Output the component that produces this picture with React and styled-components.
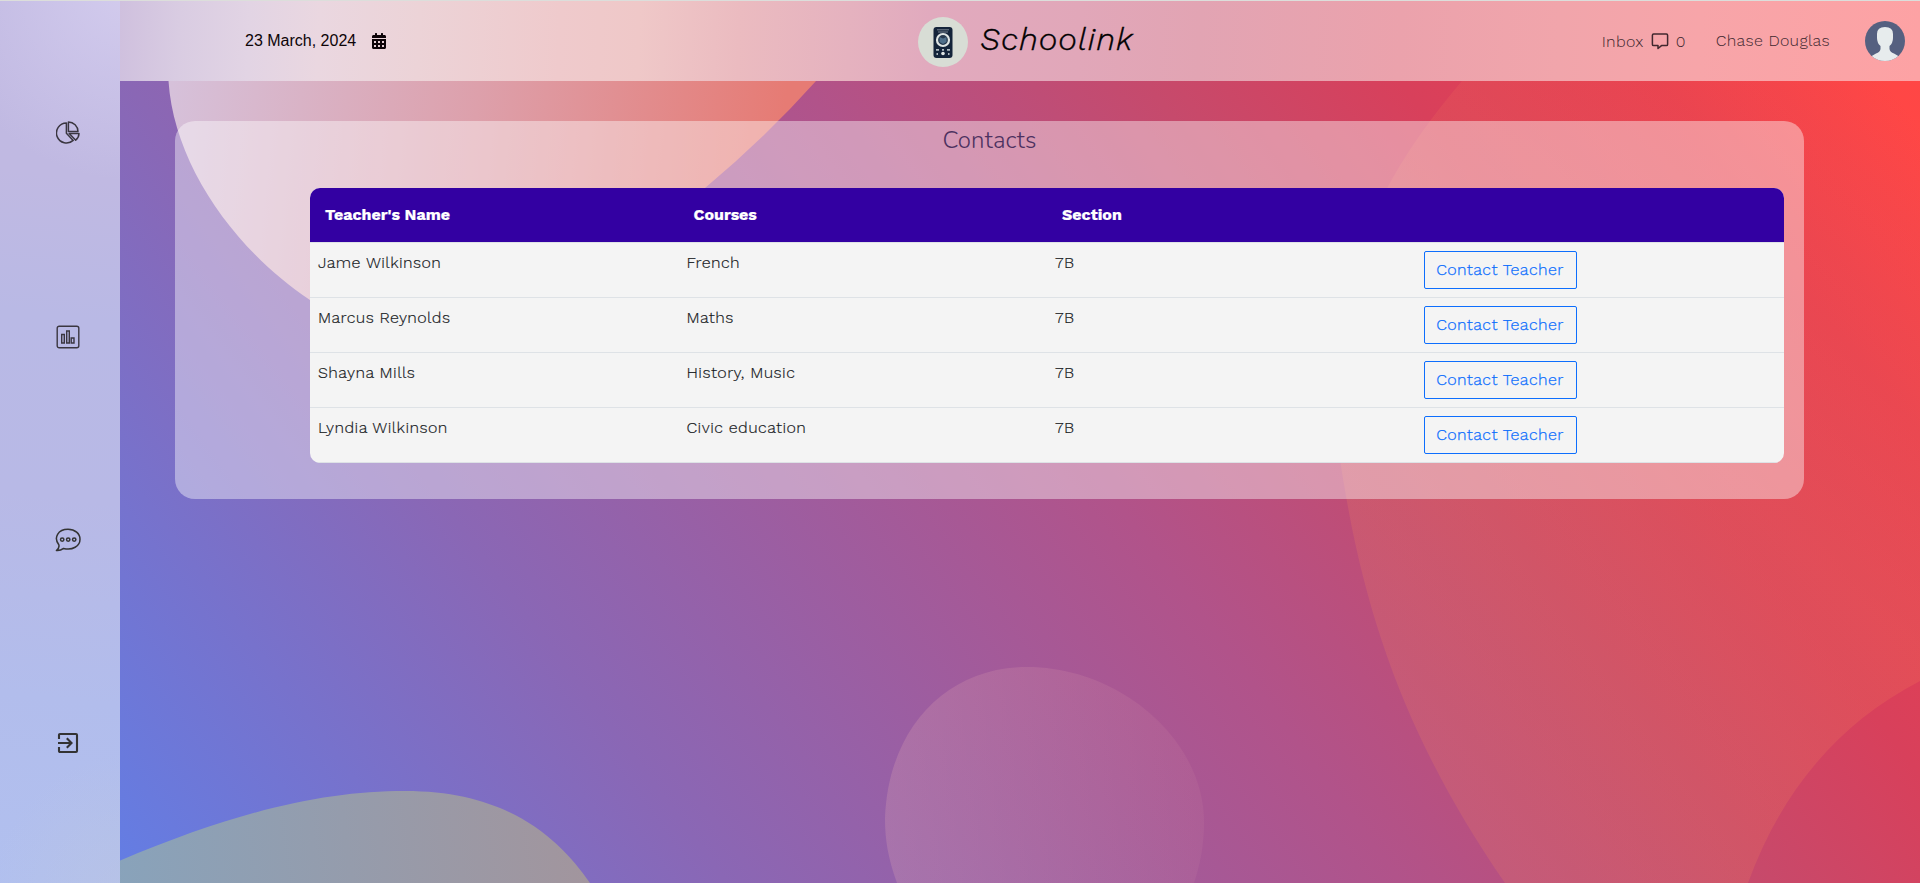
import React from "react";
import styled, { createGlobalStyle } from "styled-components";
import { FaCalendarAlt } from "react-icons/fa";

const Global = createGlobalStyle`
  *{box-sizing:border-box}
  html,body{margin:0;height:100%;overflow:hidden}
  body{font-family:"Work Sans","Inter","Noto Sans",sans-serif;font-size:16px;color:#212529}
`;
const Shell = styled.div`
  position:relative;display:flex;height:100vh;border-top:1px solid #dcdedb;overflow:hidden;
`;
const Backdrop = styled.svg`
  position:absolute;inset:-1px 0 0 0;width:100%;height:calc(100% + 1px);
`;
const Sidebar = styled.nav`
  position:relative;width:120px;flex:none;display:flex;flex-direction:column;align-items:center;
  padding:40px 0 0 16px;color:#333;
  background:
    radial-gradient(circle at 130px -10px,rgba(215,208,240,.8),rgba(215,208,240,0) 190px),
    radial-gradient(circle at 140px 900px,rgba(190,198,220,.5),rgba(190,198,220,0) 150px),
    linear-gradient(187deg,#c1b9e2 0,#c0b9e2 180px,#b9b9e5 320px,#b8b9e6 500px,#b2bdec 700px,#b1c0ef 100%);
`;
const NavItem = styled.a`
  height:203.5px;display:flex;align-items:flex-start;padding-top:80px;
  svg{display:block}
`;
const Main = styled.div`position:relative;flex:1;min-width:0;display:flex;flex-direction:column;`;
const Header = styled.header`
  height:80px;flex:none;display:grid;grid-template-columns:798px 1fr auto;align-items:center;padding-right:15px;
  background:linear-gradient(92deg,#cfc0de 0,#d9cce2 60px,#e2d4e4 130px,#ead7e0 200px,#ecd3d7 300px,#efcacc 440px,#efc8c8 520px,
    #ebbbc0 620px,#e5b2bf 730px,#e1aabe 810px,#e1a7b9 960px,#e2a4b3 1080px,#eba2ac 1280px,#f1a5ab 1440px,#f7a5a9 1580px,#fda2a4 1800px);
`;
const DateBox = styled.div`
  display:flex;align-items:center;gap:15px;padding-left:125px;color:#0d0408;
  font-family:"Liberation Sans",sans-serif;font-size:16px;
`;
const Brand = styled.div`display:flex;align-items:center;gap:12px;padding-top:2px;`;
const BrandName = styled.span`
  font-size:32px;font-style:italic;font-weight:300;color:#000;letter-spacing:1.15px;line-height:40px;margin-top:-7px;
  -webkit-text-stroke:.4px #000;
`;
const UserArea = styled.div`display:flex;align-items:center;color:#41282f;font-weight:300;letter-spacing:.3px;`;
const Inbox = styled.div`display:flex;align-items:center;gap:7px;margin-right:30px;`;
const UserName = styled.span`margin:-1px 35px 0 0;`;
const Panel = styled.section`
  margin:40px 116px 0 55px;height:378px;border-radius:20px;background:rgba(255,255,255,.41);padding:0 20px 0 135px;
`;
const Title = styled.h1`
  margin:0 0 0 -135px;width:1629px;height:67px;padding-top:3px;text-align:center;
  font:300 24px/32px "Nunito","Open Sans",sans-serif;color:#4d3160;letter-spacing:.15px;
`;
const Table = styled.div`border-radius:10px;overflow:hidden;background:#f4f4f4;`;
const Row = styled.div`
  display:grid;grid-template-columns:repeat(4,1fr);height:55px;border-bottom:1px solid #dee2e6;
  font-weight:300;letter-spacing:.41px;color:#16191c;-webkit-text-stroke:.2px;
`;
const HeadRow = styled(Row)`
  background:#3300a2;color:#fff;font-weight:700;letter-spacing:0;
`;
const HeadCell = styled.div`padding:0 15px;line-height:54px;`;
const Cell = styled.div`padding:8px;line-height:24px;`;
const ContactButton = styled.button`
  display:block;width:153px;height:38px;padding:0 0 2px;border:1px solid #0d6efd;border-radius:2px;background:transparent;
  color:#0d6efd;font:300 16px "Work Sans","Inter",sans-serif;letter-spacing:.4px;-webkit-text-stroke:.25px;
`;

const teachers = [
  ["Jame Wilkinson", "French", "7B"],
  ["Marcus Reynolds", "Maths", "7B"],
  ["Shayna Mills", "History, Music", "7B"],
  ["Lyndia Wilkinson", "Civic education", "7B"],
];

const Scenery = () => (
  <Backdrop viewBox="0 0 1920 883" preserveAspectRatio="none">
    <defs>
      <linearGradient id="base" gradientUnits="userSpaceOnUse" x1="-336" y1="252" x2="1168" y2="-876">
        <stop offset="0" stopColor="#647de3" />
        <stop offset=".251" stopColor="#8a67b5" />
        <stop offset=".538" stopColor="#b1538a" />
        <stop offset=".685" stopColor="#c64a6c" />
        <stop offset=".793" stopColor="#d8405b" />
        <stop offset=".9" stopColor="#e83f50" />
        <stop offset="1" stopColor="#ff4545" />
      </linearGradient>
      <linearGradient id="peach" gradientUnits="userSpaceOnUse" x1="170" y1="100" x2="780" y2="160">
        <stop offset="0" stopColor="#d6c1da" />
        <stop offset=".5" stopColor="#dda0ab" />
        <stop offset="1" stopColor="#e67b74" />
      </linearGradient>
      <linearGradient id="ember" gradientUnits="userSpaceOnUse" x1="1650" y1="450" x2="1900" y2="100">
        <stop offset="0" stopColor="#ff9058" stopOpacity=".17" />
        <stop offset="1" stopColor="#ff9058" stopOpacity=".02" />
      </linearGradient>
      <linearGradient id="orb" x1="0" x2="1" y1="0" y2="0">
        <stop offset="0" stopColor="#ffc8b8" stopOpacity=".18" />
        <stop offset="1" stopColor="#ffc8b8" stopOpacity=".06" />
      </linearGradient>
      <linearGradient id="moss" gradientUnits="userSpaceOnUse" x1="110" x2="580" y1="870" y2="800">
        <stop offset="0" stopColor="#88a3bb" />
        <stop offset="1" stopColor="#a2959d" />
      </linearGradient>
    </defs>
    <rect width="1920" height="883" fill="url(#base)" />
    <path d="M160 0L168.5 81C174 165 235 250 310 300C430 360 600 290 705 188Q765 138 816 81Q850 48 890 0Z" fill="url(#peach)" />
    <path d="M1540 0C1370 160 1310 300 1345 490C1370 640 1420 760 1505 883H1748C1780 795 1835 725 1920 681V0Z" fill="url(#ember)" />
    <path d="M897 883C888 858 885 840 885 818C888 730 945 667 1027 667C1120 667 1204 740 1204 822C1204 845 1200 865 1194 883Z" fill="url(#orb)" />
    <path d="M60 883L119 861C240 810 325 791 405 791C510 791 560 840 590 883Z" fill="url(#moss)" />
  </Backdrop>
);

const PieIcon = () => (
  <svg width="24" height="24" viewBox="0 0 24 24" fill="none" stroke="#3a3640" strokeWidth="1.5" strokeLinejoin="round">
    <path d="M10.4 2A10 10 0 1 0 17.2 19.4L10.4 12.2Z" />
    <path d="M12.4 1V10.5H22A9.7 9.7 0 0 0 12.4 1Z" />
    <path d="M13.2 12.5H23A9 9 0 0 1 19.7 19.2Z" />
  </svg>
);
const ChartIcon = () => (
  <svg width="24" height="24" viewBox="0 0 24 24" fill="none" stroke="#3a3640" strokeWidth="1.4">
    <rect x="1.2" y="1.2" width="21.6" height="21.6" rx="2" />
    <path d="M5.7 9.5H8.3V18H5.7ZM10.7 6H13.3V18H10.7ZM15.2 13H18V18H15.2Z" />
  </svg>
);
const ChatIcon = () => (
  <svg width="26" height="24" viewBox="0 0 26 24" fill="none" stroke="#333" strokeWidth="1.5" strokeLinejoin="round">
    <path d="M3.8 16.8C-1.8 9.5 3.2 1.3 13 1.3C20 1.3 25 5.6 25 11.2C25 18.2 17.5 22.6 8.6 20.4C6.5 22 4 22.8 1.4 22.5C3 21.2 4.6 19.2 3.8 16.8Z" />
    <circle cx="7.2" cy="11.6" r="1.7" /><circle cx="13.2" cy="11.6" r="1.7" /><circle cx="19.2" cy="11.6" r="1.7" />
  </svg>
);
const ExitIcon = () => (
  <svg width="22" height="22" viewBox="0 0 22 22" fill="none" stroke="#333" strokeWidth="2.1">
    <path d="M2 7V3Q2 2 3 2H19Q20 2 20 3V19Q20 20 19 20H3Q2 20 2 19V15M1 11H14.5M9.8 6.3L14.5 11L9.8 15.7" />
  </svg>
);
const InboxIcon = () => (
  <svg width="18" height="18" viewBox="0 0 18 18" fill="none" stroke="#41282f" strokeWidth="1.5" strokeLinejoin="round">
    <path d="M2.6 2H15.4Q16.6 2 16.6 3.2V12.4Q16.6 13.6 15.4 13.6H10.5L7 16.5V13.6H2.6Q1.4 13.6 1.4 12.4V3.2Q1.4 2 2.6 2Z" />
  </svg>
);
const LogoMark = () => (
  <svg width="50" height="50" viewBox="0 0 50 50">
    <circle cx="25" cy="25" r="25" fill="#d8ddd5" />
    <rect x="15.5" y="10" width="19" height="31" rx="3" fill="#14243a" />
    <path d="M19 12.8H31M20 15H30" stroke="#77828f" strokeWidth="1" />
    <circle cx="25" cy="23" r="6" fill="#26384d" stroke="#dfe5e4" strokeWidth="2.2" />
    <path d="M21.5 20L25 21.5L28.5 20V25L25 27L21.5 25Z" fill="#4f6f8a" />
    <circle cx="25" cy="36.5" r="1.8" fill="#dfe5e4" />
    <path d="M18 32.8H21M24 32.8H26M29 32.8H32M18.5 37H20M30 37H31.5" stroke="#b0bac1" strokeWidth="1.8" />
  </svg>
);
const Avatar = () => (
  <svg width="40" height="40" viewBox="0 0 40 40">
    <defs><clipPath id="disc"><circle cx="20" cy="20" r="20" /></clipPath></defs>
    <g clipPath="url(#disc)">
      <rect width="40" height="40" fill="#556080" />
      <path d="M12 13Q12 6 20 6T28 13V17Q28 22 24.5 25V28Q25 31 29 32.5L35 36V40H5V36L11 32.5Q15 31 15.5 28V25Q12 22 12 17Z" fill="#e7eced" />
    </g>
  </svg>
);

export default function App() {
  return (
    <Shell>
      <Global />
      <Scenery />
      <Sidebar>
        {[PieIcon, ChartIcon, ChatIcon, ExitIcon].map((Icon, i) => (
          <NavItem key={i}><Icon /></NavItem>
        ))}
      </Sidebar>
      <Main>
        <Header>
          <DateBox>23 March, 2024 <FaCalendarAlt size={16} /></DateBox>
          <Brand><LogoMark /><BrandName>Schoolink</BrandName></Brand>
          <UserArea>
            <Inbox>Inbox <InboxIcon /> 0</Inbox>
            <UserName>Chase Douglas</UserName>
            <Avatar />
          </UserArea>
        </Header>
        <Panel>
          <Title>Contacts</Title>
          <Table>
            <HeadRow>
              <HeadCell>Teacher's Name</HeadCell><HeadCell>Courses</HeadCell><HeadCell>Section</HeadCell><HeadCell />
            </HeadRow>
            {teachers.map(([name, courses, section]) => (
              <Row key={name}>
                <Cell>{name}</Cell><Cell>{courses}</Cell><Cell>{section}</Cell>
                <Cell><ContactButton>Contact Teacher</ContactButton></Cell>
              </Row>
            ))}
          </Table>
        </Panel>
      </Main>
    </Shell>
  );
}
